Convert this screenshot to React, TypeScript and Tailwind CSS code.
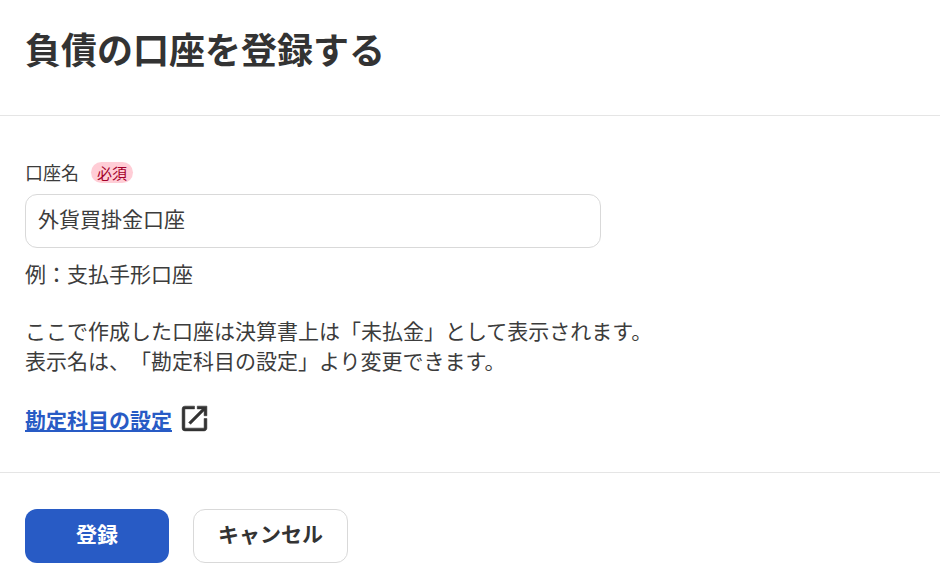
import React from 'react';

const App: React.FC = () => {
  return (
    <div className="w-[940px] h-[587px] overflow-hidden bg-white text-[#3c3c3c] [text-spacing-trim:space-all] font-['Noto_Sans_CJK_JP','Noto_Sans',sans-serif]">
      <div className="h-[116px] border-b border-[#e5e5e5] px-[25px] pt-[23px]">
        <h1 className="text-[36px] leading-[50px] font-bold text-[#333]">負債の口座を登録する</h1>
      </div>

      <div className="h-[357px] border-b border-[#e5e5e5] px-[25px] pt-[45px]">
        <div className="flex items-center gap-3 h-[23px]">
          <span className="text-[18px] leading-[23px]">口座名</span>
          <span className="h-[21px] px-[6px] rounded-full bg-[#ffcdd6] text-[#a3002a] text-[15px] leading-[21px]">必須</span>
        </div>
        <div className="mt-[10px] w-[576px] h-[54px] rounded-[12px] border border-[#d9d9d9] px-3 flex items-center text-[21px] pb-[4px]">
          外貨買掛金口座
        </div>
        <p className="mt-[10px] text-[21px] leading-[30px]">例：支払手形口座</p>
        <p className="mt-[27px] text-[21px] leading-[30px]">
          ここで作成した口座は決算書上は「未払金」として表示されます。
          <br />
          表示名は、「勘定科目の設定」より変更できます。
        </p>
        <div className="mt-[27px] flex items-center gap-[6px]">
          <a className="text-[21px] leading-[30px] font-bold text-[#285bc5] underline">勘定科目の設定</a>
          <svg width="33" height="33" viewBox="0 0 24 24" fill="#333" stroke="#333" strokeWidth="0.4">
            <path d="M19 19H5V5h7V3H5a2 2 0 0 0-2 2v14a2 2 0 0 0 2 2h14c1.1 0 2-.9 2-2v-7h-2v7zM14 3v2h3.59l-9.83 9.83 1.41 1.41L19 6.41V10h2V3h-7z" />
          </svg>
        </div>
      </div>

      <div className="px-[25px] pt-[36px] flex gap-6">
        <button className="w-[144px] h-[54px] rounded-[12px] bg-[#285bc5] text-white text-[21px] font-bold pb-[5px]">登録</button>
        <button className="w-[155px] h-[54px] rounded-[12px] bg-white border border-[#d9d9d9] text-[#333] text-[21px] font-bold pb-[5px]">キャンセル</button>
      </div>
    </div>
  );
};

export default App;
